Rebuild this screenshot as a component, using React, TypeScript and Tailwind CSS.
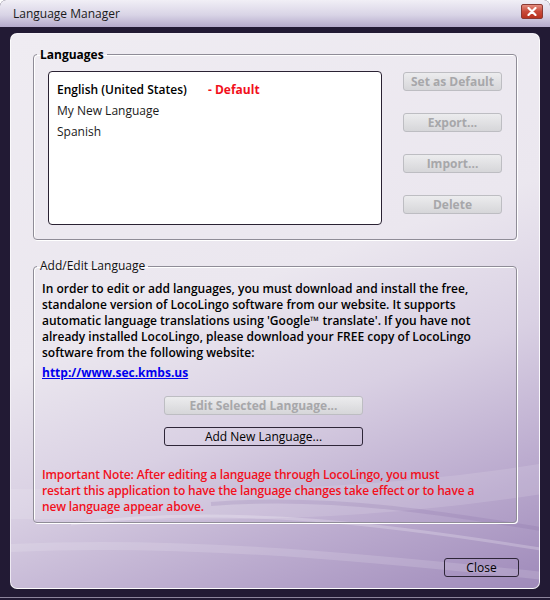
import React from "react";

const font = { fontFamily: '"Open Sans", "Noto Sans", sans-serif' };

const DisabledButton = ({ label, className = "" }: { label: string; className?: string }) => (
  <button
    disabled
    className={`h-[19px] rounded-[3px] border border-[#bdbdc2] bg-[linear-gradient(#ececee,#d6d6d9)] text-[12px] font-bold leading-none text-[#a7a7aa] ${className}`}
  >
    {label}
  </button>
);

const LinkButton = ({ label, className = "" }: { label: string; className?: string }) => (
  <button
    className={`h-[19px] rounded-[3px] border border-[#2e2638] bg-transparent text-[12px] font-medium leading-none text-black ${className}`}
  >
    {label}
  </button>
);

const languages = [
  { name: "English (United States)", isDefault: true },
  { name: "My New Language", isDefault: false },
  { name: "Spanish", isDefault: false },
];

export default function App() {
  return (
    <div className="w-[550px] h-[600px] flex flex-col bg-[#221a34] rounded-t-[6px] overflow-hidden" style={font}>
      {/* Barre de titre */}
      <div className="h-[27px] flex items-center justify-between pl-[13px] pr-[7px] bg-[linear-gradient(#f1eff6,#d9d4e6_55%,#b4aacb)]">
        <span className="text-[12px] text-[#1a1a1a]">Language Manager</span>
        <div className="w-[22px] h-[15px] mt-[-5px] rounded-[2px] border border-[#8b3a33] bg-[linear-gradient(#e48d80,#c94a3a_50%,#b8321f)] flex items-center justify-center">
          <svg width="10" height="9" viewBox="0 0 10 9">
            <path d="M1.5 1 L8.5 8 M8.5 1 L1.5 8" stroke="white" strokeWidth="2.2" strokeLinecap="round" />
          </svg>
        </div>
      </div>

      {/* Cadre */}
      <div className="flex-1 px-[10px] pt-[6px] pb-[11px] shadow-[inset_0_-2px_0_#221a34,inset_0_-3px_0_#8d859c]">
        <div className="relative h-full rounded-[7px] border border-white/80 overflow-hidden bg-[linear-gradient(160deg,#efecf2_0%,#ebe7ef_45%,#d9d0e3_64%,#bcaccf_82%,#9f8aba_100%)]">
          <svg className="absolute inset-0 pointer-events-none" width="530" height="555" viewBox="0 0 530 555">
            <path d="M-20 470 C 140 470, 330 480, 560 440" stroke="white" strokeOpacity="0.12" strokeWidth="30" fill="none" />
            <path d="M60 490 C 220 470, 380 490, 560 520" stroke="white" strokeOpacity="0.22" strokeWidth="3" fill="none" />
            <path d="M200 470 C 320 460, 440 480, 560 500" stroke="#7d65a0" strokeOpacity="0.18" strokeWidth="4" fill="none" />
            <path d="M-20 515 C 150 505, 330 520, 560 545" stroke="white" strokeOpacity="0.14" strokeWidth="8" fill="none" />
          </svg>

          <div className="relative flex flex-col h-full px-[22px] pt-[12px]">
            {/* Langues */}
            <fieldset className="rounded-[4px] border border-[#8f8c97] shadow-[inset_1px_1px_0_white,1px_1px_0_white] px-[3px] pb-[14px]">
              <legend className="px-[3px] text-[12px] font-bold leading-[17px] text-black">Languages</legend>
              <div className="flex justify-between px-[11px] pt-[8px]">
                <div className="w-[334px] h-[154px] rounded-[4px] border border-[#2a2233] bg-white px-[8px] pt-[7px]">
                  {languages.map((lang) => (
                    <div key={lang.name} className="h-[21px] flex items-center text-[12px] text-[#1a1a1a]">
                      <span className={lang.isDefault ? "font-semibold text-black w-[151px]" : ""}>{lang.name}</span>
                      {lang.isDefault && <span className="font-bold text-[#f2101c]">- Default</span>}
                    </div>
                  ))}
                </div>
                <div className="flex flex-col gap-[22px] pt-[1px]">
                  <DisabledButton label="Set as Default" className="w-[99px]" />
                  <DisabledButton label="Export..." className="w-[99px]" />
                  <DisabledButton label="Import..." className="w-[99px]" />
                  <DisabledButton label="Delete" className="w-[99px]" />
                </div>
              </div>
            </fieldset>

            {/* Ajout / modification */}
            <fieldset className="mt-[18px] rounded-[4px] border border-[#8f8c97] shadow-[inset_1px_1px_0_white,1px_1px_0_white] px-[3px] pb-[7px]">
              <legend className="px-[3px] text-[12px] leading-[16px] text-[#111]">Add/Edit Language</legend>
              <div className="px-[5px] pt-[7px]">
                <p className="text-[12px] font-semibold leading-[16px] text-black">
                  In order to edit or add languages, you must download and install the free,
                  <br />
                  standalone version of LocoLingo software from our website. It supports
                  <br />
                  automatic language translations using 'Google™ translate'. If you have not
                  <br />
                  already installed LocoLingo, please download your FREE copy of LocoLingo
                  <br />
                  software from the following website:
                </p>
                <a href="#" className="block mt-[4px] text-[12px] font-bold leading-[16px] text-[#0000ee] underline w-fit">
                  http://www.sec.kmbs.us
                </a>
                <div className="flex flex-col gap-[12px] mt-[15px] ml-[122px]">
                  <DisabledButton label="Edit Selected Language..." className="w-[199px]" />
                  <LinkButton label="Add New Language..." className="w-[199px]" />
                </div>
                <p className="mt-[21px] text-[12px] font-semibold leading-[16px] tracking-[-0.15px] text-[#f2101c]">
                  Important Note: After editing a language through LocoLingo, you must
                  <br />
                  restart this application to have the language changes take effect or to have a
                  <br />
                  new language appear above.
                </p>
              </div>
            </fieldset>

            <div className="flex justify-end mt-auto pb-[11px]">
              <LinkButton label="Close" className="w-[75px] mr-[-2px]" />
            </div>
          </div>
        </div>
      </div>
    </div>
  );
}
